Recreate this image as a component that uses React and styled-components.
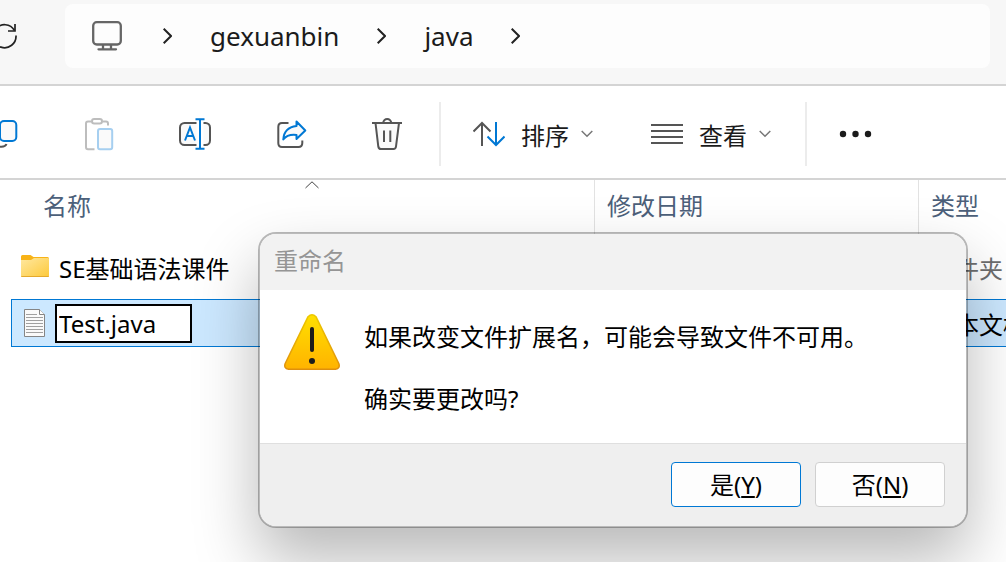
import React from 'react'
import styled, { createGlobalStyle } from 'styled-components'

const GlobalStyle = createGlobalStyle`
    * {
        box-sizing: border-box;
    }
    html, body {
        margin: 0;
        height: 100%;
        overflow: hidden;
    }
    body, button, input {
        font-family: "Noto Sans", "Noto Sans CJK SC", sans-serif;
        font-size: 24px;
        color: #000;
    }
    svg {
        display: block;
        flex-shrink: 0;
    }
`
const Explorer = styled.div`
    position: relative;
    min-height: 100vh;
    background-color: #fff;
    overflow: hidden;
`
const NavBar = styled.header`
    display: flex;
    align-items: flex-start;
    height: 86px;
    padding: 4px 16px 0 0;
    background-color: #f7f7f7;
    border-bottom: 2px solid #d4d4d4;
`
const IconButton = styled.button`
    display: flex;
    align-items: center;
    justify-content: center;
    flex-shrink: 0;
    width: ${props => props.$width || 94}px;
    height: 64px;
    padding: 0;
    border: none;
    background: none;
`
const RefreshButton = styled(IconButton)`
    margin-left: -31px;
    margin-right: 24px;
`
const AddressBar = styled.nav`
    display: flex;
    align-items: center;
    flex: 1;
    gap: 38px;
    height: 64px;
    padding-left: 27px;
    border-radius: 8px;
    background-color: #fdfdfd;
`
const Crumb = styled.a`
    font-size: 26px;
    line-height: 36px;
    color: #1b1b1b;
    text-decoration: none;
`
const PcCrumb = styled(Crumb)`
    margin-right: 3px;
`
const ToolBar = styled.div`
    display: flex;
    align-items: center;
    gap: 2px;
    height: 94px;
    padding-top: 4px;
    border-bottom: 2px solid #d4d4d4;
`
const CopyButton = styled(IconButton)`
    margin-left: -44px;
`
const MenuButton = styled.button`
    display: flex;
    align-items: center;
    gap: 16px;
    height: 64px;
    padding: 0 29px 0 27px;
    border: none;
    background: none;
    color: #1b1b1b;
    white-space: nowrap;
`
const MenuLabel = styled.span`
    display: flex;
    align-items: center;
    gap: 12px;
`
const Separator = styled.div`
    flex-shrink: 0;
    width: 2px;
    height: 64px;
    margin: 0 3px;
    background-color: #ececec;
`
const FileTable = styled.table`
    width: calc(100% - 11px);
    margin-left: 11px;
    border-spacing: 0;
    table-layout: fixed;
`
const Col = styled.col`
    width: ${props => props.$width};
`
const HeadCell = styled.th`
    position: relative;
    height: 59px;
    padding: 0 0 0 ${props => props.$first ? 32 : 12}px;
    border-right: 1px solid ${props => props.$last ? 'transparent' : '#e2e2e2'};
    font-weight: normal;
    line-height: 52px;
    text-align: left;
    vertical-align: top;
    white-space: nowrap;
    color: #4c607a;
`
const SortMark = styled.svg`
    position: absolute;
    top: 1px;
    left: 0;
    right: 0;
    margin: 0 auto;
    padding-left: 19px;
    box-sizing: content-box;
`
const Cell = styled.td`
    height: 56px;
    padding: 0;
    overflow: hidden;
`
const CellFill = styled.div`
    display: flex;
    align-items: center;
    gap: 6px;
    height: 48px;
    padding-left: ${props => props.$first ? 9 : 12}px;
    border: 1px solid ${props => props.$selected ? '#0078d4' : 'transparent'};
    border-right: none;
    border-left: ${props => props.$first ? '' : 'none'};
    background-color: ${props => props.$selected ? '#cce8ff' : 'transparent'};
    color: ${props => props.$muted ? '#6d6d6d' : '#000'};
    white-space: nowrap;
`
const FileName = styled.span`
    padding-left: 4px;
`
const RenameInput = styled.input`
    width: 137px;
    height: 39px;
    padding: 0 2px;
    border: 2px solid #000;
    border-radius: 0;
    background-color: #fff;
    outline: none;
`
const Dialog = styled.div`
    position: absolute;
    top: 232px;
    left: 258px;
    right: 38px;
    display: flex;
    flex-direction: column;
    border: 2px solid rgba(0, 0, 0, 0.27);
    border-radius: 18px;
    background-clip: padding-box;
    background-color: #fff;
    box-shadow: 0 32px 64px rgba(0, 0, 0, 0.28);
    overflow: hidden;
`
const DialogTitle = styled.div`
    height: 56px;
    padding-left: 14px;
    line-height: 54px;
    background-color: #f2f2f2;
    color: #959595;
`
const DialogBody = styled.div`
    display: flex;
    align-items: flex-start;
    gap: 24px;
    padding: 24px 24px 29px;
`
const Message = styled.div`
    display: flex;
    flex-direction: column;
    gap: 31px;
    padding-top: 7px;
`
const Line = styled.p`
    margin: 0;
    line-height: 31px;
`
const DialogFooter = styled.div`
    display: flex;
    justify-content: flex-end;
    gap: 14px;
    padding: 18px 21px 19px;
    border-top: 1px solid #dfdfdf;
    background-color: #efefef;
`
const DialogButton = styled.button`
    width: 130px;
    height: 45px;
    padding: 0;
    border: 1px solid ${props => props.$primary ? '#0078d4' : '#d0d0d0'};
    border-radius: 4px;
    background-color: #fdfdfd;
    line-height: 43px;
`

const GRAY = '#555'
const BLUE = '#0078d4'

const Refresh = () => (
    <svg width="24" height="26" viewBox="-7 23 24 26" fill="none" stroke="#222" strokeWidth="1.7">
        <path d="M16 35.500A11.500 11.500 0 1 1 14.500 30.500" />
        <path d="M15 24V31H8" />
    </svg>
)
const Monitor = () => (
    <svg width="30" height="30" viewBox="92 20 30 30" fill="none" stroke="#666" strokeWidth="2.300">
        <rect x="93.200" y="21.200" width="27.600" height="22.300" rx="3.500" />
        <path d="M103 44v4M111 44v4" />
        <path d="M98.500 48.300h17.500" strokeLinecap="round" />
    </svg>
)
const Chevron = () => (
    <svg width="9" height="16" viewBox="0 0 9 16" fill="none" stroke="#222" strokeWidth="2">
        <path d="M.7.7 8 8 .7 15.300" />
    </svg>
)
const ChevronDown = () => (
    <svg width="12" height="8" viewBox="0 0 12 8" fill="none" stroke="#777" strokeWidth="1.500">
        <path d="M.7 1 6 6.300 11.300 1" />
    </svg>
)
const Copy = () => (
    <svg width="34" height="34" viewBox="-14 117 34 34" fill="none" strokeWidth="2">
        <path d="M6.500 144Q5.500 146.800 1.500 146.800H-8" stroke={GRAY} />
        <rect x="0" y="121" width="16.300" height="20" rx="4" fill="#fafafa" stroke={BLUE} />
    </svg>
)
const Paste = () => (
    <svg width="34" height="34" viewBox="82 117 34 34" fill="none" strokeWidth="2">
        <path d="M91.500 121.500H88Q86 121.500 86 123.500V147Q86 149.200 88 149.200H94.500M102.500 121.500H106Q108 121.500 108 123.500V125.500" stroke="#bdbdbd" />
        <rect x="92" y="119" width="10" height="4.500" rx="2.200" stroke="#bdbdbd" />
        <rect x="98" y="129" width="14.200" height="20.200" rx="2" fill="#fafafa" stroke="#a6cff0" />
    </svg>
)
const Rename = () => (
    <svg width="34" height="34" viewBox="178 117 34 34" fill="none" strokeWidth="2">
        <rect x="180" y="123" width="30" height="22" rx="4.500" fill="#fafafa" stroke={GRAY} />
        <path d="M200 120V148" stroke="#fff" strokeWidth="7" />
        <path d="M185 140.500 190 127.500 195 140.500M186.600 136H193.400" stroke={BLUE} />
        <path d="M195.500 119.200H204.500M195.500 148.800H204.500M200 119V149" stroke={BLUE} />
    </svg>
)
const Share = () => (
    <svg width="34" height="34" viewBox="274 117 34 34" fill="none" strokeWidth="2">
        <path d="M288.500 123H282Q278.300 123 278.300 127V143Q278.300 147 282 147H298.500Q302.300 147 302.300 143V140.500" stroke={GRAY} />
        <path d="M296.500 121.500 305.300 130.500 296.500 139V135Q287.500 134 283.300 139.500Q284 127.500 296.500 126Z" stroke={BLUE} fill="#fafafa" strokeLinejoin="round" />
    </svg>
)
const Trash = () => (
    <svg width="34" height="34" viewBox="370 117 34 34" fill="none" stroke={GRAY} strokeWidth="2">
        <path d="M375.500 123 378.300 146.500Q378.700 149 381 149H393.500Q395.700 149 396 146.500L399 123" fill="#fafafa" />
        <path d="M372 123H402M383 123Q384 119 387.200 119T391.500 123" />
        <path d="M384 130.500V142M390.300 130.500V142" />
    </svg>
)
const Sort = () => (
    <svg width="32" height="34" viewBox="473 117 32 34" fill="none" strokeWidth="2">
        <path d="M482 123V146M473.500 131.500 482 123 490.500 131.500" stroke={GRAY} />
        <path d="M496 122V145M487.500 136.500 496 145 504.500 136.500" stroke={BLUE} />
    </svg>
)
const Lines = () => (
    <svg width="32" height="20" viewBox="0 0 32 20" stroke={GRAY} strokeWidth="2">
        <path d="M0 1H32M0 7H32M0 13H32M0 19H32" />
    </svg>
)
const Dots = () => (
    <svg width="34" height="8" viewBox="0 0 34 8" fill="#1b1b1b">
        <circle cx="4" cy="4" r="3.200" />
        <circle cx="16.500" cy="4" r="3.200" />
        <circle cx="29" cy="4" r="3.200" />
    </svg>
)
const Folder = () => (
    <svg width="28" height="28" viewBox="0 0 28 28">
        <defs>
            <linearGradient id="folder" x1="0" y1="0" x2="1" y2="1">
                <stop offset="0" stopColor="#ffe8a0" />
                <stop offset="1" stopColor="#fdc93a" />
            </linearGradient>
        </defs>
        <path d="M0 3.500Q0 2 1.500 2H9.500L12.500 4H26.500Q28 4 28 5.500V12H0Z" fill="#f8b317" />
        <path d="M0 7H10L13 5H27Q28 5 28 6V23Q28 24 27 24H1Q0 24 0 23Z" fill="url(#folder)" />
        <path d="M.3 23.500H27.700" stroke="#e5a92c" />
    </svg>
)
const TextFile = () => (
    <svg width="28" height="28" viewBox="0 0 28 28" fill="none" stroke="#858585">
        <path d="M3.500.5H18.500L23.500 5.500V27.500H3.500Z" fill="#fafafa" />
        <path d="M18.500.5V5.500H23.500" fill="#fff" />
        <path d="M5 5.500H16M5 8.500H22M5 11.500H22M5 14.500H22M5 17.500H22M5 20.500H22M5 23.500H22" stroke="#a0a0a0" />
    </svg>
)
const Warning = () => (
    <svg width="56" height="56" viewBox="0 0 56 56">
        <defs>
            <linearGradient id="warn" x1="0" y1="0" x2="0" y2="1">
                <stop offset="0" stopColor="#ffe000" />
                <stop offset="1" stopColor="#ffb300" />
            </linearGradient>
            <linearGradient id="edge" x1="0" y1="0" x2="0" y2="1">
                <stop offset="0" stopColor="#edc900" />
                <stop offset="1" stopColor="#df8f0c" />
            </linearGradient>
        </defs>
        <path d="M24 2.800Q28-1.200 32 2.800L54.800 49.500Q56.500 54.500 51.500 55.200H4.500Q-.5 54.500 1.200 49.500Z" fill="url(#warn)" stroke="url(#edge)" strokeWidth="1.500" />
        <path d="M28 15V36" stroke="#1c1c1c" strokeWidth="4" strokeLinecap="round" />
        <circle cx="28" cy="47" r="3" fill="#1c1c1c" />
    </svg>
)

const App = () => {
    return (
        <Explorer lang="zh-CN">
            <GlobalStyle />
            <NavBar>
                <RefreshButton $width={72} aria-label="刷新"><Refresh /></RefreshButton>
                <AddressBar>
                    <PcCrumb href="#pc" aria-label="此电脑"><Monitor /></PcCrumb>
                    <Chevron />
                    <Crumb href="#gexuanbin">gexuanbin</Crumb>
                    <Chevron />
                    <Crumb href="#java">java</Crumb>
                    <Chevron />
                </AddressBar>
            </NavBar>

            <ToolBar>
                <CopyButton aria-label="复制"><Copy /></CopyButton>
                <IconButton aria-label="粘贴" disabled><Paste /></IconButton>
                <IconButton aria-label="重命名"><Rename /></IconButton>
                <IconButton aria-label="共享"><Share /></IconButton>
                <IconButton aria-label="删除"><Trash /></IconButton>
                <Separator />
                <MenuButton><Sort /><MenuLabel>排序<ChevronDown /></MenuLabel></MenuButton>
                <MenuButton><Lines /><MenuLabel>查看<ChevronDown /></MenuLabel></MenuButton>
                <Separator />
                <IconButton $width={88} aria-label="更多"><Dots /></IconButton>
            </ToolBar>

            <FileTable>
                <colgroup>
                    <Col $width="584px" />
                    <Col $width="324px" />
                    <Col $width="auto" />
                </colgroup>
                <thead>
                    <tr>
                        <HeadCell $first>
                            名称
                            <SortMark width="14" height="8" viewBox="0 0 14 8" fill="none" stroke="#444">
                                <path d="M.5 7 7 .8 13.500 7" />
                            </SortMark>
                        </HeadCell>
                        <HeadCell>修改日期</HeadCell>
                        <HeadCell $last>类型</HeadCell>
                    </tr>
                </thead>
                <tbody>
                    <tr>
                        <Cell>
                            <CellFill $first><Folder /><FileName>SE基础语法课件</FileName></CellFill>
                        </Cell>
                        <Cell><CellFill /></Cell>
                        <Cell><CellFill $muted>文件夹</CellFill></Cell>
                    </tr>
                    <tr>
                        <Cell>
                            <CellFill $first $selected>
                                <TextFile />
                                <RenameInput aria-label="文件名" defaultValue="Test.java" />
                            </CellFill>
                        </Cell>
                        <Cell><CellFill $selected /></Cell>
                        <Cell><CellFill $selected>文本文档</CellFill></Cell>
                    </tr>
                </tbody>
            </FileTable>

            <Dialog role="dialog" aria-labelledby="dialog-title">
                <DialogTitle id="dialog-title">重命名</DialogTitle>
                <DialogBody>
                    <Warning />
                    <Message>
                        <Line>如果改变文件扩展名，可能会导致文件不可用。</Line>
                        <Line>确实要更改吗?</Line>
                    </Message>
                </DialogBody>
                <DialogFooter>
                    <DialogButton $primary>是(<u>Y</u>)</DialogButton>
                    <DialogButton>否(<u>N</u>)</DialogButton>
                </DialogFooter>
            </Dialog>
        </Explorer>
    )
}

export default App
